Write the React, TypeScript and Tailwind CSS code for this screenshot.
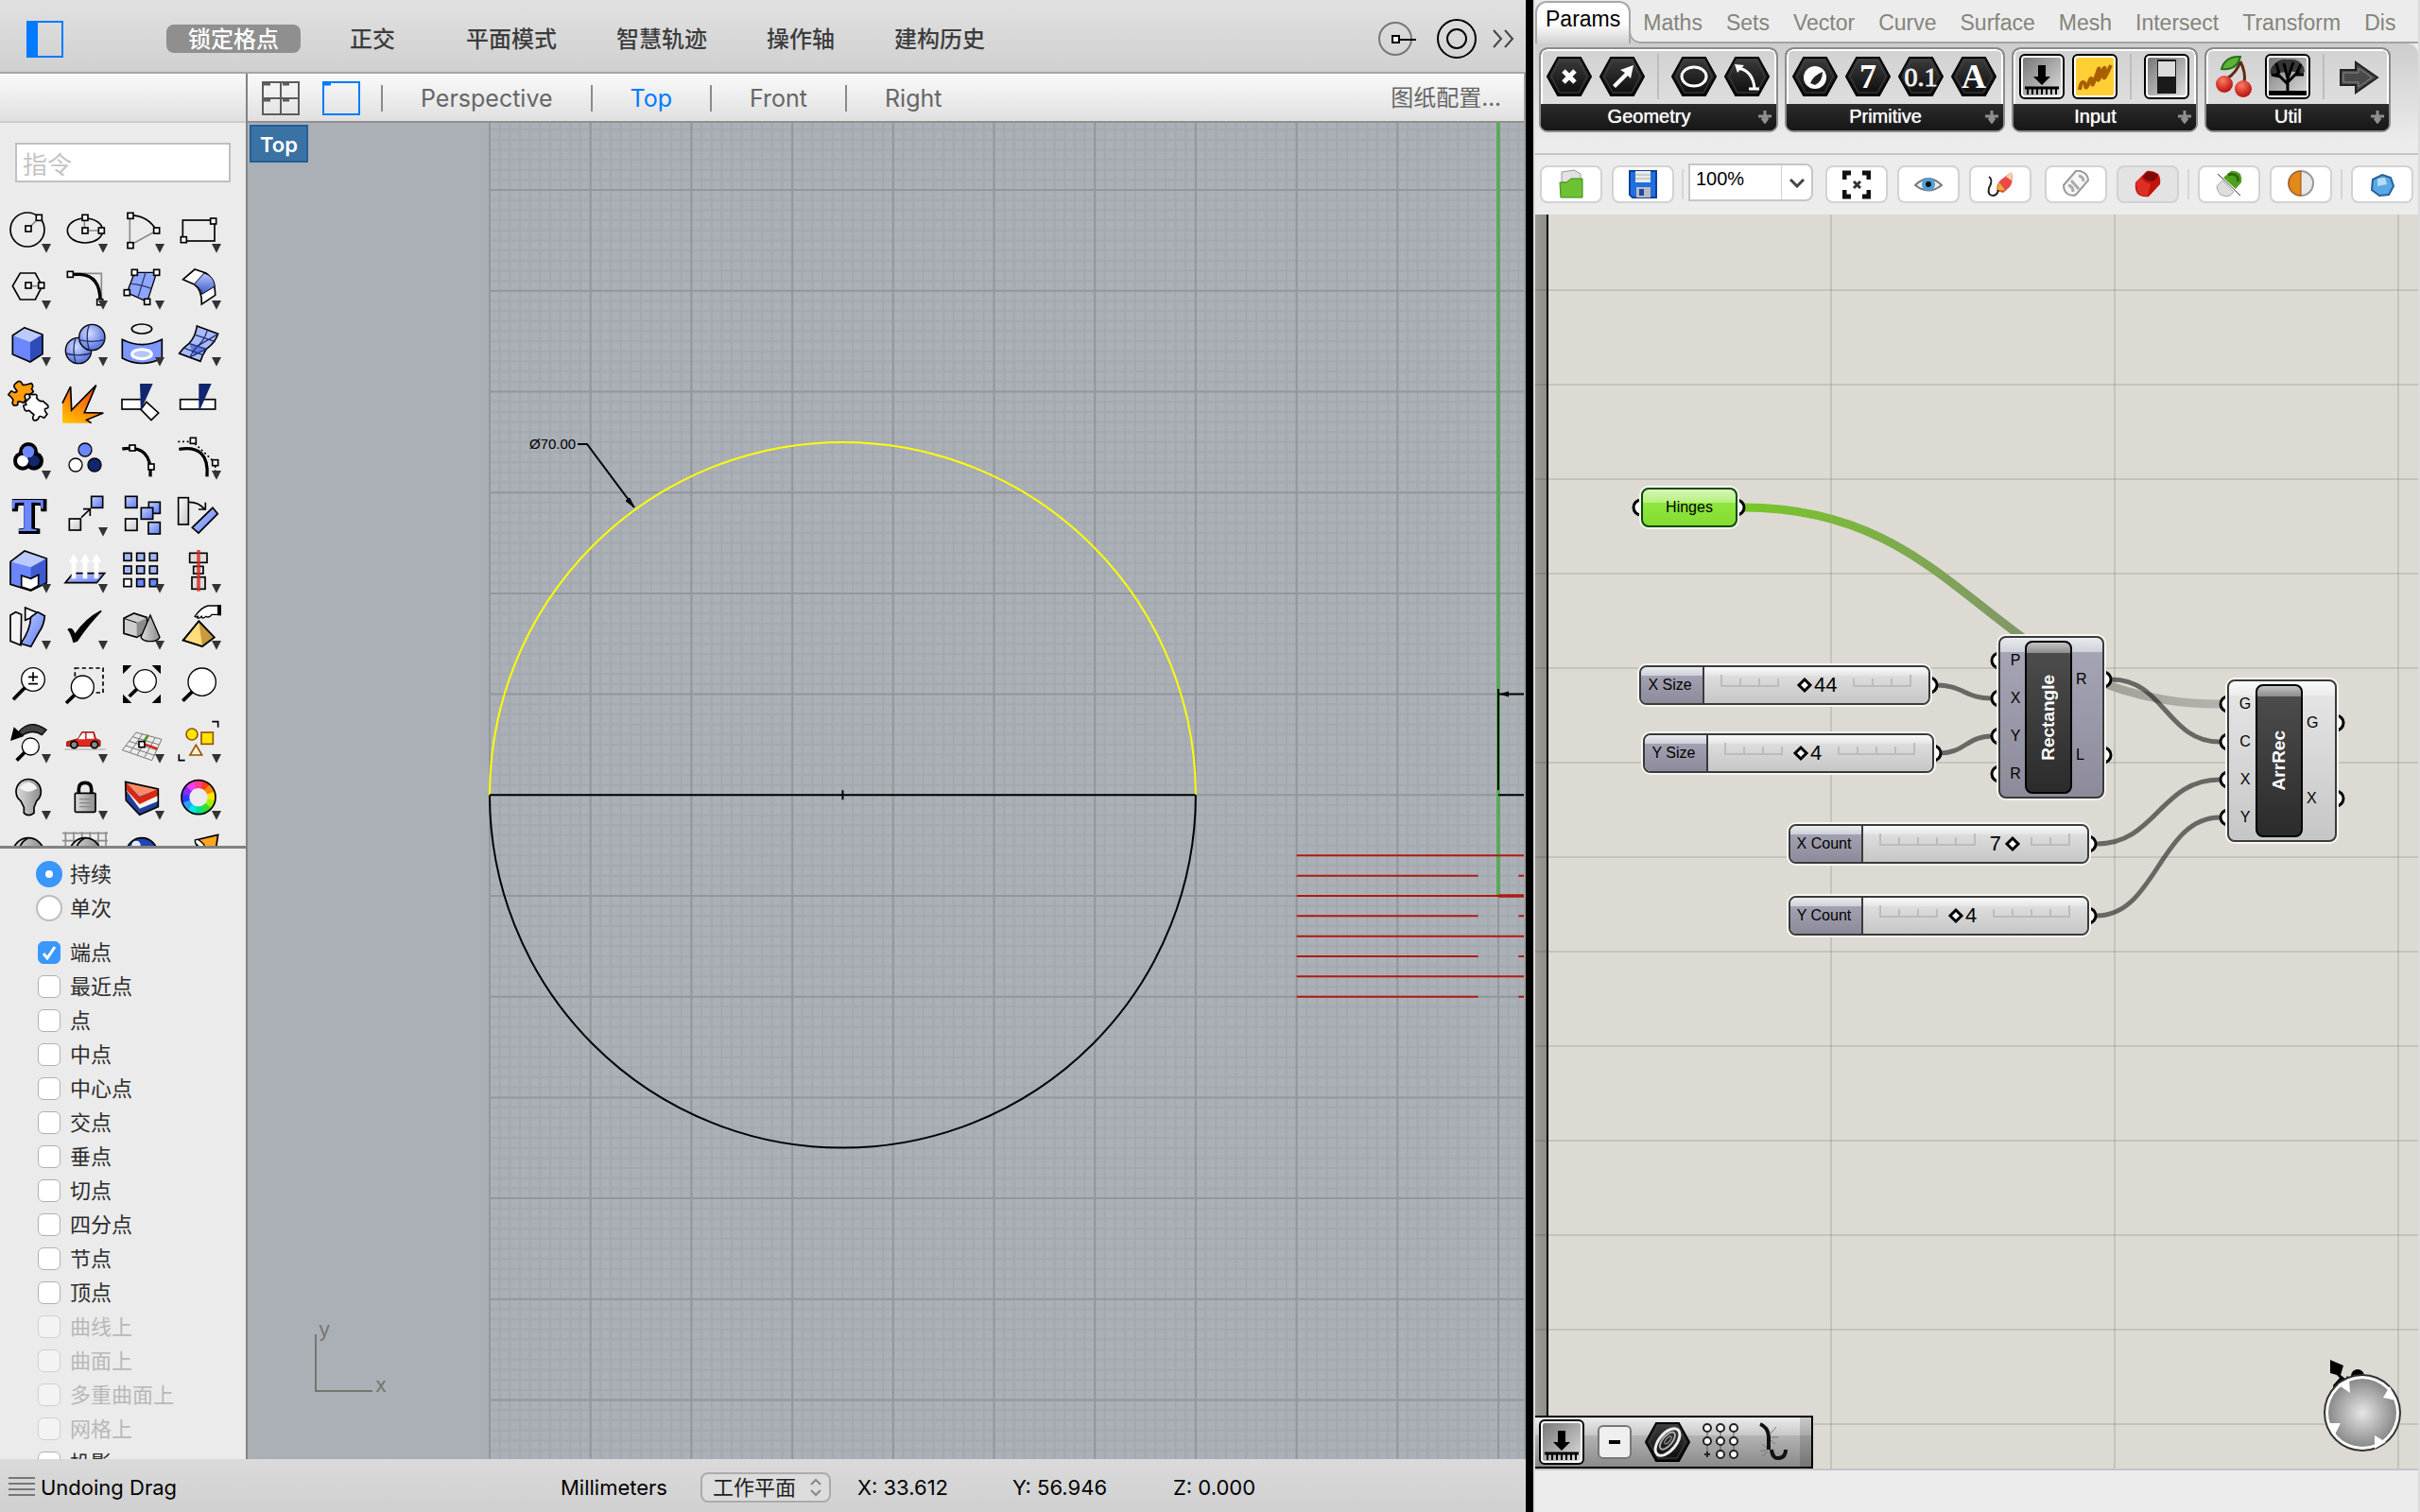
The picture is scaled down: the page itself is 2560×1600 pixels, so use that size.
import { useState } from "react";
import type { ReactNode } from "react";

// ---------- shared data ----------

const MODES = ["锁定格点", "正交", "平面模式", "智慧轨迹", "操作轴", "建构历史"];
const VIEWS = ["Perspective", "Top", "Front", "Right"];

const SNAPS = [
  { label: "端点" },
  { label: "最近点" },
  { label: "点" },
  { label: "中点" },
  { label: "中心点" },
  { label: "交点" },
  { label: "垂点" },
  { label: "切点" },
  { label: "四分点" },
  { label: "节点" },
  { label: "顶点" },
  { label: "曲线上", disabled: true },
  { label: "曲面上", disabled: true },
  { label: "多重曲面上", disabled: true },
  { label: "网格上", disabled: true },
  { label: "投影" },
];

const GH_TABS = ["Maths", "Sets", "Vector", "Curve", "Surface", "Mesh", "Intersect", "Transform", "Dis"];

// ---------- Rhino tool icons, drawn on a 180 x 180 board ----------

const BLUE = "#6b86ff";
const NAVY = "#11266e";

function Handle({ x, y }: { x: number; y: number }) {
  return <rect x={x - 9} y={y - 9} width={18} height={18} fill="#fff" stroke="#000" strokeWidth={5} />;
}

function Lens({ x, y, r, hx, hy }: { x: number; y: number; r: number; hx: number; hy: number }) {
  return (
    <>
      <line x1={x - r * 0.7} y1={y + r * 0.7} x2={hx} y2={hy} stroke="#000" strokeWidth={11} />
      <circle cx={x} cy={y} r={r} fill="#fff" stroke="#000" strokeWidth={4} />
    </>
  );
}

const WHEEL = ["#ff3b1f", "#ff8a00", "#ffe600", "#a6f000", "#2ee02e", "#00e08a", "#00e5e5", "#2aa0ff", "#2a3cff", "#8a2aff", "#f03cff", "#ff3c9a"];

const line = { fill: "none", stroke: "#000", strokeWidth: 5 };
const gray = { fill: "none", stroke: "#8c8c8c", strokeWidth: 5 };

type Tool = { name: string; menu?: boolean; art: ReactNode };

const TOOLS: Tool[] = [
  {
    name: "Circle", menu: true,
    art: <><circle cx={87} cy={84} r={54} {...line} /><path d="M90 81L124 46" {...gray} /><Handle x={90} y={81} /><Handle x={124} y={46} /></>,
  },
  {
    name: "Ellipse", menu: true,
    art: <><ellipse cx={90} cy={87} rx={56} ry={39} {...line} /><path d="M88 46V87H142" {...gray} /><Handle x={90} y={46} /><Handle x={90} y={87} /><Handle x={142} y={87} /></>,
  },
  {
    name: "Arc", menu: true,
    art: <><path d="M52 40V134L137 87" {...gray} /><path d="M54 38Q110 40 137 87" {...line} /><Handle x={54} y={40} /><Handle x={137} y={87} /><Handle x={54} y={134} /></>,
  },
  {
    name: "Rectangle", menu: true,
    art: <><rect x={40} y={54} width={101} height={66} {...line} /><Handle x={137} y={57} /><Handle x={43} y={116} /></>,
  },
  {
    name: "Polygon", menu: true,
    art: <><path d="M40 83L64 42H112L134 83L112 126H64Z" {...line} /><path d="M90 83H130" {...gray} /><Handle x={90} y={81} /><Handle x={131} y={81} /></>,
  },
  {
    name: "Fillet curves", menu: true,
    art: <><path d="M43 43H142V130" {...gray} /><path d="M43 46H75Q138 50 138 130" fill="none" stroke="#000" strokeWidth={10} /><Handle x={43} y={46} /><Handle x={137} y={134} /></>,
  },
  {
    name: "Surface from points", menu: true,
    art: <><path d="M67 40H137L107 133L43 104Z" fill="#8ea6ff" stroke="#000" strokeWidth={4} /><path d="M102 40L78 119M55 76Q90 78 122 92" fill="none" stroke="#2b3a66" strokeWidth={4} /><Handle x={67} y={40} /><Handle x={137} y={40} /><Handle x={107} y={133} /><Handle x={43} y={104} /></>,
  },
  {
    name: "Blend surface", menu: true,
    art: <><path d="M41 62L78 30L112 41Q143 60 143 112L100 141Q102 95 75 77Z" fill="#fff" stroke="#000" strokeWidth={5} /><path d="M108 42Q140 52 142 84L101 109Q98 90 76 77Z" fill="url(#blueV)" stroke="#000" strokeWidth={3} /></>,
  },
  {
    name: "Box", menu: true,
    art: <><path d="M78 35L135 57V119L96 144L40 120V60Z" fill={BLUE} /><path d="M40 60L78 35L135 57L96 81Z" fill="#bccaff" /><path d="M96 81L135 57V119L96 144Z" fill="#2e4bb8" /><path d="M78 35L135 57V119L96 144L40 120V60Z" {...line} /></>,
  },
  {
    name: "Sphere", menu: true,
    art: <><circle cx={69} cy={108} r={41} fill="url(#ball)" stroke="#000" strokeWidth={4} /><path d="M29 117Q65 128 108 117M60 68Q48 100 60 148" fill="none" stroke="#22306b" strokeWidth={4} /><circle cx={112} cy={66} r={41} fill="url(#ball)" stroke="#000" strokeWidth={4} /><path d="M71 74Q110 84 152 74M103 26Q90 60 103 106" fill="none" stroke="#22306b" strokeWidth={4} /></>,
  },
  {
    name: "Project curve", menu: true,
    art: <><ellipse cx={90} cy={39} rx={32} ry={15} {...line} /><path d="M28 73Q90 105 154 73V132Q90 165 28 132Z" fill="#7e97ff" stroke="#000" strokeWidth={5} /><ellipse cx={90} cy={119} rx={31} ry={15} fill="#b7c5ff" stroke="#fff" strokeWidth={9} /></>,
  },
  {
    name: "Mesh", menu: true,
    art: <><path d="M85 30L152 55Q142 84 115 103Q102 122 96 142L29 117Q42 98 60 85Q80 65 85 30Z" fill="#a9bbff" stroke="#000" strokeWidth={5} /><path d="M29 117L60 85L75 125L115 103L60 85Z" fill="#5f7bea" /><path d="M118 43Q108 78 85 95Q70 112 62 130M80 58L143 80M60 85L115 103M45 100L104 122M85 95L152 55M60 130L115 103" fill="none" stroke="#22306b" strokeWidth={4} /></>,
  },
  {
    name: "Explode block",
    art: (
      <>
        <path d="M48 48Q40 40 50 32Q62 18 70 32Q70 40 84 36L100 32Q108 40 100 50Q104 54 106 58Q98 70 84 66Q74 70 82 84L74 94Q60 86 56 92Q60 104 44 102Q36 96 42 86Q40 78 26 68L36 56Q50 66 54 56Z" fill="#ff9c0a" stroke="#000" strokeWidth={5} strokeLinejoin="round" />
        <path d="M80 92L96 76Q88 66 104 68Q122 64 116 78Q126 92 136 88L152 102Q156 112 144 112Q138 116 150 130L140 142Q128 134 124 138Q122 150 108 150Q100 142 108 132L92 118Q78 124 76 108Q70 100 84 100Z" fill="#fff" stroke="#000" strokeWidth={5} strokeLinejoin="round" />
      </>
    ),
  },
  {
    name: "Explode",
    art: <><path d="M18 158V95L44 42L47 117L125 38L88 125L148 126L95 148L110 158Z" fill="url(#fire)" /><path d="M18 95L44 42L47 117L125 38L88 125L148 126L95 148L110 158" {...line} /></>,
  },
  {
    name: "Trim",
    art: <><rect x={27} y={83} width={62} height={31} fill="#fff" stroke="#000" strokeWidth={5} /><path d="M105 91L143 126L120 149L87 115Z" fill="#fff" stroke="#000" strokeWidth={5} /><path d="M84 33H125L87 118Z" fill={NAVY} /></>,
  },
  {
    name: "Split",
    art: <><rect x={32} y={83} width={111} height={31} fill="#fff" stroke="#000" strokeWidth={5} /><path d="M91 33H131L94 117H91Z" fill={NAVY} /></>,
  },
  {
    name: "Group", menu: true,
    art: <><circle cx={90} cy={69} r={30} /><circle cx={72} cy={98} r={30} /><circle cx={108} cy={98} r={30} /><circle cx={108} cy={98} r={18} fill={NAVY} /><circle cx={72} cy={98} r={18} fill="#fff" /><circle cx={90} cy={69} r={19} fill={BLUE} /></>,
  },
  {
    name: "Ungroup",
    art: <g stroke="#000" strokeWidth={4}><circle cx={90} cy={63} r={21} fill={BLUE} /><circle cx={60} cy={111} r={21} fill="#fff" /><circle cx={120} cy={111} r={21} fill={NAVY} /></g>,
  },
  {
    name: "Edit points",
    art: <><path d="M28 60Q125 45 117 148" fill="none" stroke="#000" strokeWidth={10} /><Handle x={60} y={57} /><Handle x={120} y={117} /></>,
  },
  {
    name: "Control points", menu: true,
    art: <><path d="M25 37H72L143 105V150" fill="none" stroke="#000" strokeWidth={5} strokeDasharray="6 8" /><path d="M28 61Q125 45 117 148" fill="none" stroke="#000" strokeWidth={10} /><Handle x={73} y={34} /><Handle x={143} y={104} /></>,
  },
  {
    name: "Text",
    art: <><text x={93} y={144} textAnchor="middle" fontSize={154} fontWeight={700} fontFamily="Liberation Serif, serif" fill="#2e4bb8" stroke="#000" strokeWidth={12}>T</text><text x={88} y={142} textAnchor="middle" fontSize={154} fontWeight={700} fontFamily="Liberation Serif, serif" fill={BLUE}>T</text></>,
  },
  {
    name: "Move", menu: true,
    art: <><rect x={110} y={31} width={36} height={36} fill="url(#blueD)" stroke="#000" strokeWidth={5} /><rect x={40} y={102} width={36} height={36} fill="url(#whiteD)" stroke="#000" strokeWidth={5} /><path d="M78 98L105 72M84 71H106V93" {...line} /></>,
  },
  {
    name: "Copy",
    art: <g stroke="#000" strokeWidth={5}><rect x={38} y={31} width={37} height={36} fill="url(#blueD)" /><rect x={112} y={49} width={36} height={36} fill="url(#blueD)" /><rect x={88} y={67} width={37} height={36} fill="url(#blueD)" /><rect x={38} y={102} width={37} height={37} fill="url(#whiteD)" /><rect x={111} y={113} width={37} height={37} fill="url(#blueD)" /></g>,
  },
  {
    name: "Rotate",
    art: <><rect x={26} y={35} width={32} height={85} fill="url(#whiteD)" stroke="#000" strokeWidth={5} /><path d="M135 67L151 86L90 147L70 130Z" fill="url(#blueD)" stroke="#000" strokeWidth={5} /><path d="M58 49Q90 48 110 72M90 72H112V50" {...line} /></>,
  },
  {
    name: "Boolean", menu: true,
    art: <><path d="M33 58L78 24L148 48V125L98 150L33 130Z" fill={BLUE} /><path d="M33 58L78 24L148 48L98 76Z" fill="#bccaff" /><path d="M98 76L148 48V125L98 150Z" fill="#3d5bd0" /><path d="M68 102L98 112L122 100V134L98 148L68 138Z" fill="#fff" stroke="#000" strokeWidth={5} /><path d="M33 58L78 24L148 48V125L98 150L33 130Z" {...line} /></>,
  },
  {
    name: "Direction", menu: true,
    art: <><path d="M52 95H152L127 125H27Z" fill="url(#blueD)" stroke="#000" strokeWidth={5} /><path d="M47 112V60H38L54 33L70 60H61V112ZM83 112V60H74L90 33L106 60H97V112ZM119 112V60H110L126 33L142 60H133V112Z" fill="#fff" /></>,
  },
  {
    name: "Array", menu: true,
    art: (
      <g stroke="#000" strokeWidth={5}>
        {[0, 1, 2].map((r) => [0, 1, 2].map((c) => (
          <rect key={`${r}${c}`} x={33 + c * 41} y={31 + r * 41} width={24} height={24} fill={r === 2 && c === 0 ? "#fff" : r === 2 ? BLUE : "#a3b5f5"} />
        )))}
      </g>
    ),
  },
  {
    name: "Align", menu: true,
    art: <><g fill="#ddd" stroke="#000" strokeWidth={5}><rect x={62} y={31} width={55} height={30} /><rect x={74} y={73} width={31} height={23} /><rect x={69} y={107} width={42} height={38} /></g><path d="M90 21V152" stroke="#d8281e" strokeWidth={11} opacity={0.8} /></>,
  },
  {
    name: "Bend", menu: true,
    art: <><path d="M33 48L50 38L68 46L66 143L33 130Z" fill="#f4f4f4" stroke="#000" strokeWidth={5} /><path d="M80 64V24L118 40L98 56Z" fill="#fff" stroke="#000" strokeWidth={5} /><path d="M98 54L120 38L142 50Q140 80 122 105L98 148L66 138Q96 95 98 54Z" fill="url(#blueD)" stroke="#000" strokeWidth={5} /></>,
  },
  {
    name: "Check", menu: true,
    art: <path d="M34 93Q48 82 58 106Q90 58 140 32L143 36Q100 80 66 131L52 136Q46 108 34 93Z" />,
  },
  {
    name: "Solids", menu: true,
    art: <><path d="M33 58L65 42L106 55V98L74 118L33 106Z" fill="#cfcfcf" stroke="#000" strokeWidth={5} /><path d="M74 72L104 57V97L74 116Z" fill="#8c8c8c" /><path d="M33 58L74 72" stroke="#000" strokeWidth={3} /><path d="M117 48L147 118Q140 131 117 131Q94 131 87 118Z" fill="url(#greyH)" stroke="#000" strokeWidth={4} /></>,
  },
  {
    name: "Drag", menu: true,
    art: <><path d="M91 67L140 118L102 147L41 128Z" fill="#ffdd7a" stroke="#000" strokeWidth={5} /><path d="M91 67L140 118L102 147Z" fill="#c79a3c" /><path d="M91 67L140 118L102 147L41 128Z" {...line} /><path d="M152 18H120Q100 22 78 52Q82 56 90 50L86 56Q92 60 100 52Q102 62 114 52Q124 58 132 46H152Z" fill="#fff" stroke="#000" strokeWidth={4} /><rect x={151} y={15} width={11} height={34} /></>,
  },
  {
    name: "Zoom",
    art: <><Lens x={105} y={72} r={37} hx={42} hy={136} /><path d="M90 64H120M105 49V78M90 86H120" {...line} /></>,
  },
  {
    name: "Zoom window",
    art: <><rect x={58} y={36} width={89} height={78} fill="none" stroke="#000" strokeWidth={5} strokeDasharray="13 9" /><Lens x={82} y={96} r={36} hx={30} hy={147} /></>,
  },
  {
    name: "Zoom extents",
    art: <><path d="M30 27H58L30 55ZM150 27V55L122 27ZM30 147V119L58 147ZM150 147H122L150 119Z" /><Lens x={100} y={77} r={36} hx={50} hy={126} /></>,
  },
  { name: "Zoom selected", art: <Lens x={101} y={80} r={44} hx={40} hy={140} /> },
  {
    name: "Undo view", menu: true,
    art: <><path d="M58 60Q95 14 147 52L133 68Q103 48 70 70Z" fill="#444" stroke="#000" strokeWidth={4} /><path d="M44 43L76 72L33 87Z" /><Lens x={97} y={105} r={27} hx={53} hy={149} /></>,
  },
  {
    name: "Named views", menu: true,
    art: <><path d="M25 114H155" stroke="#bbb" strokeWidth={5} /><path d="M32 104V90L68 80L80 59H118L124 80L138 86V104Z" fill="#e0281c" stroke="#8c1008" strokeWidth={3} /><path d="M68 82L82 62H90V82ZM95 62H115L119 80H95Z" fill="#fff" /><circle cx={55} cy={99} r={11} fill="#888" stroke="#000" strokeWidth={5} /><circle cx={120} cy={99} r={11} fill="#888" stroke="#000" strokeWidth={5} /></>,
  },
  {
    name: "Construction plane", menu: true,
    art: <><path d="M72 60L153 82L122 149L28 116ZM61 74L145 99M50 88L137 116M39 102L130 133M92 65L52 124M112 71L75 132M133 76L98 140" fill="none" stroke="#777" strokeWidth={3} /><path d="M92 96L110 68" stroke="#4a9a20" strokeWidth={7} /><path d="M100 98L140 112" stroke="#e02010" strokeWidth={7} /><Handle x={90} y={98} /></>,
  },
  {
    name: "Selection filter", menu: true,
    art: <><path d="M133 26H152V44M28 130V149H47" {...line} /><g stroke="#9a5200" strokeWidth={5}><circle cx={69} cy={66} r={18} fill="#ffe600" /><rect x={99} y={60} width={37} height={37} fill="#ffe600" /><path d="M82 100L63 132H101Z" fill="#fff3d6" /></g></>,
  },
  {
    name: "Lights", menu: true,
    art: <><path d="M51 68A39 39 0 0 1 130 68Q130 86 116 98L108 118V136Q90 150 76 136V118L66 98Q51 86 51 68Z" fill="url(#greyH)" stroke="#000" strokeWidth={5} /><path d="M62 58Q70 40 90 38Q110 40 118 58Q90 78 62 58Z" fill="#f2f2f2" /></>,
  },
  {
    name: "Lock", menu: true,
    art: <><path d="M70 76V60Q70 40 90 40Q110 40 110 60V76" fill="none" stroke="#000" strokeWidth={11} /><rect x={58} y={73} width={65} height={60} rx={3} fill="url(#greyH)" stroke="#000" strokeWidth={5} /><path d="M72 92H108M72 104H108M72 116H108" stroke="#888" strokeWidth={4} /></>,
  },
  {
    name: "Layers", menu: true,
    art: <><path d="M38 37L142 60V116L83 142L40 96Z" fill="#233f9c" /><path d="M38 60L83 118L142 92V80L83 104Z" fill="#fff" /><path d="M38 60L83 122L142 98V84L83 106L40 56Z" fill="#f4f4f4" /><path d="M38 37L83 86L142 60V80L83 108L38 60Z" fill="#dc2810" /><path d="M38 37L142 60L83 84Z" fill="#ff8c66" /><path d="M38 37L142 60V116L83 142L40 96Z" {...line} /></>,
  },
  {
    name: "Colour", menu: true,
    art: (
      <>
        {WHEEL.map((c, i) => (
          <circle key={c} cx={90} cy={86} r={41} fill="none" stroke={c} strokeWidth={24} pathLength={120} strokeDasharray="11 109" strokeDashoffset={-i * 10} transform="rotate(-80 90 86)" />
        ))}
        <circle cx={90} cy={86} r={54} {...line} />
      </>
    ),
  },
  { name: "Shade", art: <><circle cx={90} cy={85} r={50} fill="url(#greyH)" stroke="#000" strokeWidth={5} /><path d="M90 35Q60 50 60 85" {...line} /></> },
  { name: "Shade with grid", art: <><path d="M18 20H162M18 44H162M28 16V60M54 16V60M80 16V60M106 16V60M132 16V60M156 16V60" {...gray} /><circle cx={90} cy={85} r={50} fill="url(#greyH)" stroke="#000" strokeWidth={5} /><path d="M90 35Q60 50 60 85" {...line} /></> },
  { name: "Render", art: <><circle cx={90} cy={85} r={50} fill="#2344b4" stroke="#000" strokeWidth={5} /><circle cx={72} cy={58} r={14} fill="#e6ecff" /></> },
  { name: "Spotlight", art: <><path d="M80 42L152 25L142 90L84 60Z" fill="#ffa51e" stroke="#000" strokeWidth={5} /><ellipse cx={94} cy={54} rx={8} ry={18} transform="rotate(-50 94 54)" fill="#fff" stroke="#000" strokeWidth={4} /></> },
];

function SharedDefs() {
  return (
    <svg className="absolute h-0 w-0" aria-hidden="true">
      <defs>
        <linearGradient id="blueV" x1="0" y1="0" x2="0" y2="1"><stop offset="0" stopColor="#b9c8ff" /><stop offset="1" stopColor="#3a58c8" /></linearGradient>
        <linearGradient id="blueD" x1="0" y1="0" x2="1" y2="1"><stop offset="0" stopColor="#c6d2ff" /><stop offset="1" stopColor="#5a78f5" /></linearGradient>
        <linearGradient id="whiteD" x1="0" y1="0" x2="1" y2="1"><stop offset="0" stopColor="#fff" /><stop offset="1" stopColor="#c4c4c4" /></linearGradient>
        <linearGradient id="greyH" x1="0" y1="0" x2="1" y2="0"><stop offset="0" stopColor="#ddd" /><stop offset="1" stopColor="#8c8c8c" /></linearGradient>
        <radialGradient id="ball" cx="0.4" cy="0.35" r="0.7"><stop offset="0" stopColor="#d3ddff" /><stop offset="1" stopColor="#4a68dc" /></radialGradient>
        <linearGradient id="fire" x1="0" y1="1" x2="0.6" y2="0"><stop offset="0" stopColor="#ffc800" /><stop offset="1" stopColor="#ff4a10" /></linearGradient>
        <linearGradient id="hex" x1="0" y1="0" x2="0" y2="1"><stop offset="0" stopColor="#3c3c3c" /><stop offset="1" stopColor="#0c0c0c" /></linearGradient>
        <linearGradient id="metal" x1="0" y1="0" x2="1" y2="1"><stop offset="0" stopColor="#777" /><stop offset="0.5" stopColor="#aaa" /><stop offset="1" stopColor="#ddd" /></linearGradient>
        <radialGradient id="compass"><stop offset="0" stopColor="#e6e6e6" /><stop offset="1" stopColor="#8a8a8a" /></radialGradient>
        <radialGradient id="cherry" cx="0.4" cy="0.3" r="0.7"><stop offset="0" stopColor="#ff7a66" /><stop offset="1" stopColor="#b80f0a" /></radialGradient>
      </defs>
    </svg>
  );
}

// ---------- Rhino window ----------

function RhinoToolbar() {
  const [active, setActive] = useState("锁定格点");
  return (
    <header className="flex h-[78px] flex-none items-center border-b-2 border-[#a6a6a6] bg-linear-to-b from-[#e1e1e1] to-[#d0d0d0] pt-1.5 pr-3 pl-7">
      <button aria-label="Sidebar" className="flex-none">
        <svg width="39" height="39" viewBox="0 0 39 39" className="block">
          <rect x="1" y="1" width="37" height="37" fill="none" stroke="#007aff" strokeWidth="2" />
          <rect width="12" height="39" fill="#007aff" />
        </svg>
      </button>
      <nav className="ml-[109px] flex gap-[17px]">
        {MODES.map((m) => (
          <button
            key={m}
            onClick={() => setActive(m)}
            className={`h-[30px] min-w-[118px] rounded-lg px-[23px] text-2xl leading-8 font-medium whitespace-nowrap ${
              m === active ? "bg-[#8f8f8f] text-white" : "text-[#3c3c3c]"
            }`}
          >
            {m}
          </button>
        ))}
      </nav>
      <div className="ml-auto flex items-center gap-4">
        <button aria-label="Record" className="mr-1">
          <svg width="46" height="42" viewBox="0 0 46 42" className="block" fill="none">
            <circle cx="22" cy="21" r="17" stroke="#777" strokeWidth="2" />
            <path d="M25 22H44" stroke="#000" strokeWidth="2" />
            <rect x="19" y="18" width="7" height="7" fill="#fff" stroke="#000" strokeWidth="2" />
          </svg>
        </button>
        <button aria-label="Target">
          <svg width="42" height="42" viewBox="0 0 42 42" className="block" fill="none" stroke="#000" strokeWidth="2">
            <circle cx="21" cy="21" r="20" />
            <circle cx="21" cy="21" r="10" />
          </svg>
        </button>
        <button aria-label="More">
          <svg width="24" height="20" viewBox="0 0 24 20" className="block" fill="none" stroke="#444" strokeWidth="2">
            <path d="M2 1L10 10L2 19M14 1L22 10L14 19" />
          </svg>
        </button>
      </div>
    </header>
  );
}

function CommandPanel() {
  const [mode, setMode] = useState("持续");
  const [snaps, setSnaps] = useState<string[]>(["端点"]);

  const toggle = (label: string) =>
    setSnaps((s) => (s.includes(label) ? s.filter((x) => x !== label) : [...s, label]));

  return (
    <aside className="flex w-[262px] flex-none flex-col border-r-2 border-[#828282] bg-[#ebebeb]">
      <div className="h-[52px] flex-none border-b-2 border-[#cccccc] bg-linear-to-b from-[#fafafa] to-[#e0e0e0]" />
      <div className="flex-none px-4 pt-[21px] pb-[22px]">
        <input
          type="text"
          aria-label="指令"
          placeholder="指令"
          className="h-[42px] w-full border-2 border-[#c0c0c0] bg-white px-1.5 pt-1 text-[26px] leading-8 outline-none placeholder:text-[#c4c4c4]"
        />
      </div>

      {/* tool palette */}
      <div className="grid h-[680px] flex-none auto-rows-[60px] grid-cols-[repeat(4,60px)] overflow-hidden">
        {TOOLS.map((t) => (
          <button key={t.name} aria-label={t.name} className="h-[60px] w-[60px]">
            <svg width="60" height="60" viewBox="0 0 180 180" className="block overflow-visible">
              {t.art}
              {t.menu && <path d="M132 129H162L147 158Z" fill="#333" />}
            </svg>
          </button>
        ))}
      </div>

      {/* object snaps */}
      <div className="min-h-0 flex-1 overflow-hidden border-t-3 border-[#828282] pt-[9px] pl-[38px] text-[22px] leading-9 text-[#2c2c2c]">
        {["持续", "单次"].map((m) => (
          <label key={m} className="flex h-9 items-center gap-2">
            <span className="relative flex h-7 w-7 flex-none">
              <input
                type="radio"
                name="snap-mode"
                checked={mode === m}
                onChange={() => setMode(m)}
                className="peer h-7 w-7 appearance-none rounded-full border-2 border-[#bdbdbd] bg-white checked:border-[#3a97fd] checked:bg-[#3a97fd]"
              />
              <span className="pointer-events-none absolute top-[10px] left-[10px] hidden h-2 w-2 rounded-full bg-white peer-checked:block" />
            </span>
            {m}
          </label>
        ))}
        <div className="mt-[11px]">
          {SNAPS.map(({ label, disabled }) => (
            <label key={label} className={`flex h-9 items-center gap-2.5 pl-0.5 ${disabled ? "text-[#b8b8b8]" : ""}`}>
              <span className="relative flex h-6 w-6 flex-none">
                <input
                  type="checkbox"
                  disabled={disabled}
                  checked={snaps.includes(label)}
                  onChange={() => toggle(label)}
                  className="peer h-6 w-6 appearance-none rounded-md border border-[#b0b0b0] bg-white checked:border-[#3a97fd] checked:bg-[#3a97fd] disabled:border-[#d0d0d0] disabled:bg-[#f3f3f3]"
                />
                <svg viewBox="0 0 24 24" className="pointer-events-none absolute inset-0 hidden h-6 w-6 peer-checked:block" fill="none" stroke="#fff" strokeWidth="3">
                  <path d="M6 13L10 18L18 6" />
                </svg>
              </span>
              {label}
            </label>
          ))}
        </div>
      </div>
    </aside>
  );
}

function ViewTabs() {
  const [view, setView] = useState("Top");
  return (
    <div className="flex h-[52px] flex-none items-center border-b-2 border-[#909090] bg-linear-to-b from-[#fafafa] to-[#e0e0e0] pt-0.5 pr-6 pl-[15px]">
      <button aria-label="Four views">
        <svg width="40" height="36" viewBox="0 0 40 36" className="block" fill="none" stroke="#5c5c5c" strokeWidth="2">
          <rect x="1" y="1" width="38" height="34" />
          <path d="M20 0V36M0 18H40" />
          <path d="M2 3H9M22 3H29M2 20H9M22 20H29" strokeWidth="3" />
        </svg>
      </button>
      <button aria-label="Single view" className="mr-[22px] ml-6">
        <svg width="40" height="36" viewBox="0 0 40 36" className="block" fill="none" stroke="#007aff" strokeWidth="2">
          <rect x="1" y="1" width="38" height="34" />
          <path d="M2 3H9" strokeWidth="3" />
        </svg>
      </button>
      {VIEWS.map((v) => (
        <div key={v} className="flex items-center">
          <span className="h-7 w-0.5 bg-[#8a8a8a]" />
          <button onClick={() => setView(v)} className={`px-10 text-[25px] leading-9 ${v === view ? "text-[#007aff]" : "text-[#666]"}`}>
            {v}
          </button>
        </div>
      ))}
      <button className="ml-auto text-2xl whitespace-nowrap text-[#666]">图纸配置...</button>
    </div>
  );
}

// model units -> viewport pixels
const U = 10.67;
const OX = 1323;
const OY = 818;
const px = (x: number) => OX + x * U;
const py = (y: number) => OY - y * U;
const range = (a: number, b: number) => Array.from({ length: b - a + 1 }, (_, i) => a + i);

function Viewport() {
  const r = 35 * U;
  return (
    <div className="relative min-h-0 flex-1 overflow-hidden bg-[#abb0b7]">
      <svg className="absolute inset-0 h-full w-full" fill="none">
        <g stroke="#a2a8af" strokeWidth="2" strokeOpacity="0.8">
          {range(-100, 3).map((i) => <line key={`v${i}`} x1={px(i)} x2={px(i)} y1={py(80)} y2={py(-60)} />)}
          {range(-60, 80).map((i) => <line key={`h${i}`} x1={px(-100)} x2={px(3)} y1={py(i)} y2={py(i)} />)}
        </g>
        <g stroke="#92979b" strokeWidth="2">
          {range(-10, 0).map((i) => <line key={`v${i}`} x1={px(i * 10)} x2={px(i * 10)} y1={py(80)} y2={py(-60)} />)}
          {range(-6, 8).map((i) => <line key={`h${i}`} x1={px(-100)} x2={px(3)} y1={py(i * 10)} y2={py(i * 10)} />)}
        </g>

        {/* world axes */}
        <line x1={OX} x2={OX} y1="0" y2={OY} stroke="#5ba85d" strokeWidth="4" />
        <line x1={OX} x2={px(3)} y1={OY} y2={OY} stroke="#a8423c" strokeWidth="4" />

        {/* hinge cuts */}
        <g stroke="#b01a10" strokeWidth="2">
          {range(0, 7).map((i) => {
            const y = py(4 - i * 2);
            return i % 2 === 0 ? (
              <line key={i} x1={px(-20)} x2={px(3)} y1={y} y2={y} />
            ) : (
              <path key={i} d={`M${px(-20)} ${y}H${px(-2)}M${px(2)} ${y}H${px(3)}`} />
            );
          })}
        </g>

        {/* half circles */}
        <path d={`M${px(-100)} ${py(10)}A${r} ${r} 0 0 0 ${px(-30)} ${py(10)}`} stroke="#000" strokeWidth="2" />
        <path d={`M${px(-100)} ${py(10)}A${r} ${r} 0 0 1 ${px(-30)} ${py(10)}`} stroke="#ffff00" strokeWidth="2" />
        <path d={`M${px(-100)} ${py(10)}H${px(-30)}M${px(-65)} ${py(10) - 5}v10`} stroke="#000" strokeWidth="2" />
        <path d={`M${OX} 599V706M${OX} ${py(10)}H1350M${OX} ${py(20)}H1350`} stroke="#000" strokeWidth="2" />
        <path d={`M${OX + 1} ${py(20)}l10 -3v6z`} fill="#000" />

        {/* dimension */}
        <path d="M349 340H359L409 407" stroke="#000" strokeWidth="2" />
        <path d="M409 407L400 400L404 397Z" fill="#000" stroke="#000" />
        <text x="298" y="345" fontSize="15" fontFamily="Liberation Sans, sans-serif" fill="#000">Ø70.00</text>

        {/* axis marker */}
        <path d="M72 1282V1342H132" stroke="#76766f" strokeWidth="2" />
        <g fontSize="22" fontFamily="Inter, sans-serif" fill="#76766f">
          <text x="75" y="1284">y</text>
          <text x="135" y="1343">x</text>
        </g>
      </svg>
      <span className="absolute top-0.5 left-0.5 flex h-10 w-[62px] items-center justify-center border-2 border-[#215f96] bg-[#3b72a4] pt-0.5 text-[22px] font-semibold text-white">
        Top
      </span>
    </div>
  );
}

function StatusBar() {
  return (
    <footer className="flex h-14 flex-none items-center bg-linear-to-b from-[#dadada] to-[#d0d0d0] pt-1 pl-[9px] text-[22px] text-black">
      <svg width="28" height="22" viewBox="0 0 28 22" stroke="#777" strokeWidth="2">
        <path d="M0 1H28M0 7H28M0 13H28M0 19H28" />
      </svg>
      <span className="ml-1.5 w-[550px]">Undoing Drag</span>
      <span className="w-[148px]">Millimeters</span>
      <span className="relative w-[138px]">
        <select aria-label="工作平面" className="block h-8 w-full appearance-none rounded-lg border-2 border-[#ababab] bg-[#dcdcdc] pl-[11px] text-[22px] leading-6 text-[#222]">
          <option>工作平面</option>
        </select>
        <svg width="12" height="20" viewBox="0 0 12 20" className="pointer-events-none absolute top-1.5 right-[10px]" fill="none" stroke="#888" strokeWidth="2">
          <path d="M1 7L6 2L11 7M1 13L6 18L11 13" />
        </svg>
      </span>
      <span className="ml-7 w-[164px]">X: 33.612</span>
      <span className="w-[170px]">Y: 56.946</span>
      <span>Z: 0.000</span>
    </footer>
  );
}

// ---------- Grasshopper ribbon ----------

function Hex({ children }: { children: ReactNode }) {
  return (
    <svg width="48" height="48" viewBox="0 0 48 48" className="block">
      <path d="M1 24L12 4H36L47 24L36 44H12Z" fill="url(#hex)" stroke="#000" strokeWidth="2" />
      <path d="M5 24L14 7H34L43 24L34 41H14Z" fill="none" stroke="#444" />
      {children}
    </svg>
  );
}

function Tile({ fill = "url(#metal)", children }: { fill?: string; children: ReactNode }) {
  return (
    <svg width="48" height="48" viewBox="0 0 48 48" className="block">
      <rect x="1" y="1" width="46" height="46" rx="5" fill="#fff" stroke="#000" strokeWidth="2" />
      <rect x="4" y="4" width="40" height="40" rx="2" fill={fill} />
      {children}
    </svg>
  );
}

const sliderTile = (
  <Tile>
    <path d="M20 12H28V24H33L24 33L15 24H20Z" />
    <path d="M6 36H42" stroke="#000" strokeWidth="3" />
    <path d="M9 37V43M14 37V43M19 37V43M24 37V43M29 37V43M34 37V43M39 37V43" stroke="#000" strokeWidth="2" />
  </Tile>
);

const GROUPS: { name: string; width: string; items: (ReactNode | "sep")[] }[] = [
  {
    name: "Geometry", width: "w-[253px]",
    items: [
      <Hex><path d="M18 18L30 30M30 18L18 30" stroke="#fff" strokeWidth="5" /></Hex>,
      <Hex><path d="M14 33L27 20L22 17L36 12L33 26L30 23L17 36Z" fill="#fff" /></Hex>,
      "sep",
      <Hex><ellipse cx="24" cy="24" rx="13" ry="10" fill="none" stroke="#fff" strokeWidth="3" /></Hex>,
      <Hex><path d="M15 15Q30 18 32 36M26 37H37" fill="none" stroke="#fff" strokeWidth="3" /><path d="M11 11L21 12L14 20Z" fill="#fff" /></Hex>,
    ],
  },
  {
    name: "Primitive", width: "w-[233px]",
    items: [
      <Hex><circle cx="24" cy="25" r="12" fill="#fff" /><path d="M19 31Q22 23 32 19Q32 29 24 33Z" fill="#222" /></Hex>,
      <Hex><text x="24" y="36" textAnchor="middle" fontSize="36" fontWeight="700" fontFamily="Liberation Serif, serif" fill="#fff">7</text></Hex>,
      <Hex><text x="24" y="34" textAnchor="middle" fontSize="28" fontFamily="Liberation Serif, serif" fill="#eee" stroke="#eee">0.1</text></Hex>,
      <Hex><text x="24" y="36" textAnchor="middle" fontSize="36" fontWeight="700" fontFamily="Liberation Serif, serif" fill="#fff">A</text></Hex>,
    ],
  },
  {
    name: "Input", width: "w-[197px]",
    items: [
      sliderTile,
      <Tile fill="#ffcf33"><path d="M8 38Q10 26 14 32Q14 40 18 30Q20 22 22 30Q20 38 26 22Q30 8 28 24Q26 34 32 18Q36 10 34 22Q32 32 41 12" fill="none" stroke="#a85f00" strokeWidth="4" /></Tile>,
      "sep",
      <Tile><rect x="14" y="6" width="20" height="36" fill="#1a1a1a" /><rect x="15" y="8" width="18" height="16" fill="#ddd" /></Tile>,
    ],
  },
  {
    name: "Util", width: "w-[197px]",
    items: [
      <svg width="48" height="48" viewBox="0 0 48 48" className="block">
        <path d="M30 8Q26 20 16 26M30 8Q36 20 34 30" fill="none" stroke="#5c2a14" strokeWidth="3" />
        <path d="M10 16Q14 2 30 3Q26 18 10 16Z" fill="#5cb338" stroke="#27701a" strokeWidth="2" />
        <circle cx="13" cy="32" r="9" fill="url(#cherry)" />
        <circle cx="33" cy="37" r="9" fill="url(#cherry)" />
      </svg>,
      <Tile>
        <rect x="4" y="39" width="40" height="5" />
        <path d="M24 42V24M24 32L12 20M24 30L36 18M24 26L20 10M24 26L30 9M16 24L7 22M32 22L41 22M15 21L12 10M34 19L38 11" stroke="#000" strokeWidth="3" fill="none" />
        <path d="M7 14Q14 4 24 6Q36 4 41 14Q44 22 36 22Q30 16 24 20Q14 18 8 24Q4 20 7 14Z" fill="#000" opacity="0.65" />
      </Tile>,
      "sep",
      <svg width="48" height="48" viewBox="0 0 48 48" className="block">
        <path d="M4 17H20V9L43 25L20 41V33H4Z" fill="#4a4a4a" stroke="#222" strokeWidth="2" />
        <path d="M7 20H23V15L37 25L23 35V30H7Z" fill="none" stroke="#888" />
      </svg>,
    ],
  },
];

function Ribbon() {
  return (
    <div className="flex-none overflow-hidden">
      <div className="flex h-[46px] items-end">
        <button className="relative z-10 h-[45px] flex-none rounded-t-xl border-2 border-b-0 border-[#a8a8a8] bg-linear-to-b from-white from-50% to-[#d2d2d2] px-[9px] pb-2 text-[23px] leading-[25px] text-black">
          Params
        </button>
        <svg width="12" height="12" viewBox="0 0 12 12" className="-ml-0.5 flex-none">
          <path d="M0 0Q1 11 12 11V12H0Z" fill="#d0d0d0" />
          <path d="M1 0Q2 10 12 11" fill="none" stroke="#a8a8a8" strokeWidth="2" />
        </svg>
        <div className="-ml-[13px] flex h-[46px] flex-1 items-end gap-[25px] overflow-hidden border-b-2 border-[#a3a3a3] pb-[5px] pl-4 text-[23px] text-[#84847a] [clip-path:inset(0_0_0_12px)]">
          {GH_TABS.map((t) => (
            <button key={t} className="leading-[30px]">{t}</button>
          ))}
        </div>
      </div>
      <div className="flex h-[116px] items-start gap-[7px] rounded-tr-xl bg-linear-to-b from-[#cdcdcd] to-[#ececec] to-90% pt-1 pl-1">
        {GROUPS.map((g) => (
          <section key={g.name} className={`flex h-[90px] flex-none flex-col overflow-hidden rounded-[9px] border-2 border-[#8c8c8c] bg-[#1c1c1c] ${g.width}`}>
            <div className="flex flex-1 items-center gap-2 rounded-t-md border-2 border-b-0 border-white bg-linear-to-b from-[#d2d2d2] to-[#dedede] px-1 pb-0.5">
              {g.items.map((it, i) =>
                it === "sep" ? (
                  <span key={i} className="mr-[5px] ml-[5px] h-12 w-0.5 bg-[#bdbdbd]" />
                ) : (
                  <button key={i} aria-label={`${g.name} ${i + 1}`} className="flex-none">{it}</button>
                ),
              )}
            </div>
            <div className="flex h-7 flex-none items-center bg-linear-to-b from-[#2c2c2c] to-[#161616] pr-1 pb-0.5">
              <span className="flex-1 text-center text-xl leading-6 text-white [text-shadow:0_0_1px_#fff]">{g.name}</span>
              <svg width="16" height="16" viewBox="0 0 16 16" stroke="#8f8f8f" strokeWidth="3" fill="none">
                <path d="M8 2V14M1 8H15M5 10L8 14L11 10" />
              </svg>
            </div>
          </section>
        ))}
      </div>
    </div>
  );
}

function ToolButton({ name, pressed, children }: { name: string; pressed?: boolean; children: ReactNode }) {
  return (
    <button
      aria-label={name}
      className={`flex h-10 w-[66px] flex-none items-center justify-center rounded-lg border-2 border-[#d2d2d2] ${pressed ? "bg-[#e3e3e3]" : "bg-white"}`}
    >
      <svg width="30" height="32" viewBox="0 0 30 32" className="block">{children}</svg>
    </button>
  );
}

const Rule = () => <span className="-mx-px h-8 w-0.5 flex-none bg-[#d6d6d6]" />;

function GhToolbar() {
  return (
    <div className="flex h-[65px] flex-none items-center overflow-hidden border-t-2 border-[#c4c4c4] pb-0.5 pl-[5px]">
      <div className="flex items-center gap-[10px]">
        <ToolButton name="Open">
          <path d="M5 14V3L18 1L25 5V14Z" fill="#e2e2e2" stroke="#999" />
          <path d="M3 14H10L15 10H27V30H4Z" fill="#6cc233" stroke="#3c8a17" />
        </ToolButton>
        <ToolButton name="Save">
          <path d="M1 2H29V30H4L1 27Z" fill="#1f6fe0" stroke="#103f94" strokeWidth="2" />
          <rect x="7" y="2" width="16" height="12" fill="#eaeaea" />
          <path d="M7 6H23M7 10H23" stroke="#aaa" />
          <rect x="8" y="19" width="15" height="11" fill="#bbb" />
          <rect x="11" y="21" width="5" height="7" fill="#1a4aa8" />
        </ToolButton>
      </div>
      <div className="mx-[9px] flex items-center gap-1.5">
        <Rule />
        <span className="relative -mt-1 block h-10 w-[132px]">
          <select aria-label="Zoom" className="block h-10 w-full appearance-none rounded-r-lg border-2 border-[#c6c6c6] bg-white pb-2 pl-1.5 text-xl leading-7">
            <option>100%</option>
          </select>
          <span className="pointer-events-none absolute top-0.5 right-[33px] h-9 w-px bg-[#d0d0d0]" />
          <svg width="16" height="10" viewBox="0 0 16 10" className="pointer-events-none absolute top-4 right-[9px]" fill="none" stroke="#444" strokeWidth="3">
            <path d="M1 1L8 8L15 1" />
          </svg>
        </span>
      </div>
      <div className="ml-1 flex items-center gap-[10px]">
        <ToolButton name="Zoom extents">
          <path d="M2 11V4H9M21 4H28V11M28 22V29H21M9 29H2V22" fill="none" stroke="#111" strokeWidth="5" />
          <path d="M12 13L19 20M19 13L12 20" stroke="#333" strokeWidth="3" />
        </ToolButton>
        <ToolButton name="Preview">
          <path d="M1 17Q15 3 29 17Q15 28 1 17Z" fill="#e8eef2" stroke="#777" strokeWidth="2" />
          <circle cx="15" cy="16" r="7" fill="#4f9fd8" />
          <circle cx="15" cy="16" r="3" fill="#111" />
        </ToolButton>
        <ToolButton name="Sketch">
          <path d="M11 23Q11 15 16 11L27 3Q29 14 25 19L18 25Z" fill="#e84a48" />
          <path d="M11 23L14 14L20 22Z" fill="#e8b030" />
          <path d="M21 8L27 3L27 12Z" fill="#f3d3a8" />
          <path d="M3 8Q8 11 3 20Q1 28 8 28Q12 27 13 22" fill="none" stroke="#222" strokeWidth="2" />
        </ToolButton>
        <div className="ml-1 flex">
          <ToolButton name="No preview">
            <path d="M2 17L15 2Q19 1 24 4Q28 7 28 12L15 27Q11 29 6 26Q2 23 2 17Z" fill="#f6f6f6" stroke="#999" strokeWidth="2" />
            <path d="M7 17Q12 18 12 24M18 7Q23 8 23 13M10 12L18 21" fill="none" stroke="#aaa" strokeWidth="3" />
          </ToolButton>
        </div>
        <ToolButton name="Shaded preview" pressed>
          <path d="M2 14L14 2Q20 1 26 5Q29 9 28 16L16 29Q9 30 4 26Q1 21 2 14Z" fill="#c3140c" />
          <path d="M14 3Q20 2 26 6Q24 12 19 13Q12 12 10 8Z" fill="#7d0a05" />
          <path d="M2 14L8 9Q12 15 18 15L15 28Q9 29 5 25Z" fill="#dc3024" />
        </ToolButton>
        <Rule />
        <ToolButton name="Selected only">
          <path d="M9 9L17 2Q22 1 27 5Q29 10 28 14L22 21Z" fill="#4fa01e" />
          <path d="M14 6Q20 4 24 8Q25 11 24 13" fill="none" stroke="#2a6a0c" strokeWidth="3" />
          <path d="M2 18L8 12L20 24L16 28Q11 30 6 27Q2 23 2 18Z" fill="#ddd" stroke="#aaa" />
          <path d="M3 5L27 28" stroke="#333" strokeWidth="1" />
        </ToolButton>
        <ToolButton name="Document preview">
          <circle cx="15" cy="15" r="13" fill="#e8e8e8" stroke="#999" strokeWidth="2" />
          <path d="M15 2A13 13 0 0 0 15 28Z" fill="#e08a1a" stroke="#a8480c" />
        </ToolButton>
        <Rule />
        <ToolButton name="Mesh quality">
          <path d="M15 6L24 9L27 18L22 27L12 28L4 22L5 11Z" fill="#5aa9e4" stroke="#27609c" strokeWidth="2" />
          <path d="M10 10L18 9L20 16L10 18Z" fill="#b8dcf8" />
        </ToolButton>
      </div>
    </div>
  );
}

// ---------- Grasshopper canvas ----------

type SliderNode = {
  label: string; value: number; max: number; x: number; y: number; width: number; labelWidth: number; flip?: boolean;
};

const SLIDERS: SliderNode[] = [
  { label: "X Size", value: 44, max: 100, x: 110, y: 477, width: 308, labelWidth: 67 },
  { label: "Y Size", value: 4, max: 10, x: 114, y: 549, width: 308, labelWidth: 67 },
  { label: "X Count", value: 7, max: 10, x: 268, y: 645, width: 318, labelWidth: 77, flip: true },
  { label: "Y Count", value: 4, max: 10, x: 268, y: 721, width: 318, labelWidth: 77 },
];

const WIRES = [
  [424, 498, 483, 512],
  [428, 570, 483, 552],
  [610, 492, 724, 558],
  [594, 666, 724, 598],
  [594, 742, 724, 638],
];

const GRIPS = [
  [112, 310], [213, 310],
  [417, 498], [421, 570], [585, 666], [585, 742],
  [491, 472], [491, 512], [491, 552], [491, 592], [601, 492], [601, 572],
  [733, 518], [733, 558], [733, 598], [733, 638], [847, 538], [847, 618],
];

function wire([x1, y1, x2, y2]: number[]) {
  const d = (x2 - x1) * 0.48;
  return `M${x1} ${y1}C${x1 + d} ${y1} ${x2 - d} ${y2} ${x2} ${y2}`;
}

function SliderBox({ node }: { node: SliderNode }) {
  const [value, setValue] = useState(node.value);
  const pos = (value / node.max) * 200;
  const cx = 20 + pos;
  // the diamond and its number cover part of the scale
  const before = range(0, 10).filter((i) => i * 20 - pos < (node.flip ? -32 : -9));
  const after = range(0, 10).filter((i) => i * 20 - pos > (node.flip ? 4 : 36));
  return (
    <div
      className="absolute flex h-[42px] overflow-hidden rounded-lg border-2 border-[#3a3a3a] shadow-[0_0_0_2px_#f6f6f2]"
      style={{ left: node.x, top: node.y, width: node.width }}
    >
      <div
        className="flex flex-none items-center justify-center border-r-2 border-[#3a3a3a] bg-[linear-gradient(#e8ecef,#cdd1d8_24%,#a2a1b2_24%,#8d8b9a)] pr-1 text-base text-black"
        style={{ width: node.labelWidth }}
      >
        {node.label}
      </div>
      <div className="relative flex-1 bg-[linear-gradient(#fafafa,#e4e4e4_24%,#dddddd_24%,#c6c6c6)]">
        <svg width="240" height="38" className="absolute inset-0" fill="none">
          {[before, after].map((ticks, n) =>
            ticks.length > 0 && (
              <g key={n} stroke="#bcbcbc" strokeWidth="2">
                {ticks.map((i) => <path key={i} d={`M${18 + i * 20} ${i % 5 === 0 ? 8 : 12}V20`} />)}
                <path d={`M${17 + ticks[0] * 20} 20H${19 + ticks[ticks.length - 1] * 20}`} />
              </g>
            ),
          )}
          <path d={`M${cx - 2} 13L${cx + 4} 19L${cx - 2} 25L${cx - 8} 19Z`} fill="#fff" stroke="#000" strokeWidth="3" />
          <text x={node.flip ? cx - 14 : cx + 8} y="26" textAnchor={node.flip ? "end" : "start"} fontSize="22" fontFamily="Liberation Sans, sans-serif" fill="#000">
            {value}
          </text>
        </svg>
        <input
          type="range"
          aria-label={node.label}
          min={0}
          max={node.max}
          value={value}
          onChange={(e) => setValue(Number(e.target.value))}
          className="absolute inset-0 h-full w-full cursor-pointer opacity-0"
        />
      </div>
    </div>
  );
}

function ComponentBox({ name, ins, outs, box, body, edge }: { name: string; ins: string[]; outs: string[]; box: string; body: string; edge: string }) {
  return (
    <div className={`absolute flex rounded-lg border-2 border-[#3a3a3a] text-base text-black shadow-[0_0_0_2px_#f6f6f2] ${box} ${body}`}>
      <div className={`flex flex-col py-1 ${edge}`}>
        {ins.map((p) => (
          <span key={p} className="flex h-10 items-center justify-center">{p}</span>
        ))}
      </div>
      <div className="my-[3px] flex w-[50px] items-center justify-center rounded-lg border-2 border-black bg-[linear-gradient(#c4c4c4,#8c8c8c_7%,#4c4c4c_7%,#2b2b2b)]">
        <span className="rotate-180 text-[19px] leading-6 font-bold text-white [writing-mode:vertical-rl]">{name}</span>
      </div>
      <div className="flex flex-1 flex-col py-1 pl-1">
        {outs.map((p) => (
          <span key={p} className="flex h-20 items-center">{p}</span>
        ))}
      </div>
    </div>
  );
}

function Compass() {
  return (
    <svg width="96" height="112" viewBox="0 0 96 112" className="absolute right-[13px] bottom-[11px]">
      <path d="M16 8L30 14L27 24L32 28L34 25L38 29L24 40L20 42L19 35L26 27L23 24L16 22Z" />
      <circle cx="45" cy="25" r="7" />
      <circle cx="50" cy="64" r="41" fill="#333" />
      <circle cx="50" cy="64" r="39" fill="#fff" />
      <circle cx="50" cy="64" r="36" fill="url(#compass)" />
      <path d="M24 34L36 28L37 43ZM72 48L79 36L86 51ZM14 75L27 75L20 89ZM63 88L75 95L63 102Z" fill="#fff" />
    </svg>
  );
}

function CanvasPalette() {
  return (
    <div className="absolute bottom-0 left-0 flex h-14 w-[294px] items-center overflow-hidden border-2 border-l-0 border-black bg-[linear-gradient(#ececec,#c8c8c8_36%,#b4b4b4_36%,#8a8a8a)] pl-1">
      <button aria-label="Number slider">{sliderTile}</button>
      <button aria-label="Remove" className="ml-3.5 flex h-9 w-9 items-center justify-center rounded-md border-2 border-[#777] bg-[#efefef]">
        <span className="h-1 w-3 bg-black" />
      </button>
      <button aria-label="Loft" className="ml-3.5">
        <Hex>
          <g fill="none" stroke="#eee" transform="rotate(-50 24 24)">
            <ellipse cx="24" cy="24" rx="17" ry="9" strokeWidth="3" />
            <ellipse cx="25" cy="23" rx="11" ry="5" strokeWidth="2" stroke="#aaa" />
            <ellipse cx="26" cy="23" rx="5" ry="2" strokeWidth="1" stroke="#aaa" />
          </g>
        </Hex>
      </button>
      <button aria-label="Array" className="ml-3">
        <svg width="40" height="44" viewBox="0 0 40 44" className="block" fill="#fff" stroke="#222" strokeWidth="2">
          <path d="M6 8V36M20 8V36M34 8V36" stroke="#555" strokeWidth="1" />
          {[0, 1, 2].map((r) => [0, 1, 2].map((c) => (r === 2 && c === 0 ? null : <circle key={`${r}${c}`} cx={6 + c * 14} cy={7 + r * 14} r="4" />)))}
          <path d="M6 32V38M3 35H9" />
        </svg>
      </button>
      <button aria-label="Disconnect" className="ml-5">
        <svg width="32" height="44" viewBox="0 0 32 44" className="block" fill="none">
          <path d="M2 3Q10 6 11 16V30M14 30Q15 40 22 39Q29 38 29 30" stroke="#111" strokeWidth="4" />
          <path d="M12 14L19 6M14 17H21M13 20L18 24M4 24L9 28M2 31H9M4 37L10 32" stroke="#777" strokeWidth="1" />
        </svg>
      </button>
      <span className="ml-auto h-full w-3 bg-black/15" />
    </div>
  );
}

function GhCanvas() {
  return (
    <div className="relative min-h-0 flex-1 overflow-hidden border-b-2 border-[#c4c4c4] bg-[#dddad3]">
      <div className="absolute inset-y-0 left-0 w-[14px] border-r-2 border-black bg-linear-to-r from-[#9c9b96] to-[#8f8f89]" />
      <svg className="absolute inset-0 h-full w-full" fill="none">
        <defs>
          <linearGradient id="select-wire" gradientUnits="userSpaceOnUse" x1="221" y1="0" x2="726" y2="0">
            <stop offset="0" stopColor="#78c727" />
            <stop offset="0.6" stopColor="#82946c" />
            <stop offset="0.78" stopColor="#a3a39a" />
            <stop offset="1" stopColor="#b5b2ad" />
          </linearGradient>
        </defs>
        <g stroke="#000" strokeOpacity="0.1" strokeWidth="2">
          {range(0, 13).map((i) => <line key={`h${i}`} x1="0" x2="100%" y1={80 + i * 100} y2={80 + i * 100} />)}
          {range(0, 2).map((i) => <line key={`v${i}`} x1={313 + i * 300} x2={313 + i * 300} y1="0" y2="100%" />)}
        </g>
        <path d={wire([220, 310, 724, 518])} stroke="url(#select-wire)" strokeWidth="9" />
        {WIRES.map((w) => (
          <path key={w.join()} d={wire(w)} stroke="#000" strokeOpacity="0.53" strokeWidth="5" />
        ))}
        {GRIPS.map(([x, y]) => (
          <circle key={`${x}-${y}`} cx={x} cy={y} r="8" fill="#fff" stroke="#000" strokeWidth="3" />
        ))}
      </svg>

      <div className="absolute top-[289px] left-[112px] flex h-[42px] w-[102px] items-center justify-center rounded-lg border-2 border-[#0b4a0b] bg-[linear-gradient(#d8f7b8,#b4ef7c_38%,#8fe63c_38%,#84dc33)] text-base text-black shadow-[0_0_0_2px_#f6f6f2]">
        Hinges
      </div>
      {SLIDERS.map((s) => <SliderBox key={s.label} node={s} />)}
      <ComponentBox
        name="Rectangle"
        ins={["P", "X", "Y", "R"]}
        outs={["R", "L"]}
        edge="w-[26px] pl-1.5"
        box="left-[490px] top-[446px] h-[172px] w-[112px]"
        body="bg-[linear-gradient(#e8ecef,#cdd1d8_9%,#a5a4b5_9%,#8d8b9a)]"
      />
      <ComponentBox
        name="ArrRec"
        ins={["G", "C", "X", "Y"]}
        outs={["G", "X"]}
        edge="w-7 pl-1.5"
        box="left-[732px] top-[492px] h-[172px] w-[116px]"
        body="bg-[linear-gradient(#fafafa,#ececec_9%,#e4e4e4_9%,#c6c6c6)]"
      />

      <CanvasPalette />
      <Compass />
    </div>
  );
}

function App() {
  return (
    <div className="flex h-screen w-full overflow-hidden bg-black">
      <SharedDefs />
      <div className="flex min-w-0 flex-1 flex-col bg-[#ebebeb] font-[Inter,'Noto_Sans_CJK_SC',sans-serif]">
        <RhinoToolbar />
        <div className="flex min-h-0 flex-1">
          <CommandPanel />
          <main className="flex min-w-0 flex-1 flex-col border-r-2 border-[#a0a0a0]">
            <ViewTabs />
            <Viewport />
          </main>
        </div>
        <StatusBar />
      </div>
      <div className="w-2 flex-none bg-black" />
      <div className="flex w-[938px] flex-none flex-col border-x-2 border-[#dcdcdc] bg-[#ececec] font-['Liberation_Sans',sans-serif]">
        <Ribbon />
        <GhToolbar />
        <GhCanvas />
        <div className="h-11 flex-none" />
      </div>
    </div>
  );
}

export default App;
